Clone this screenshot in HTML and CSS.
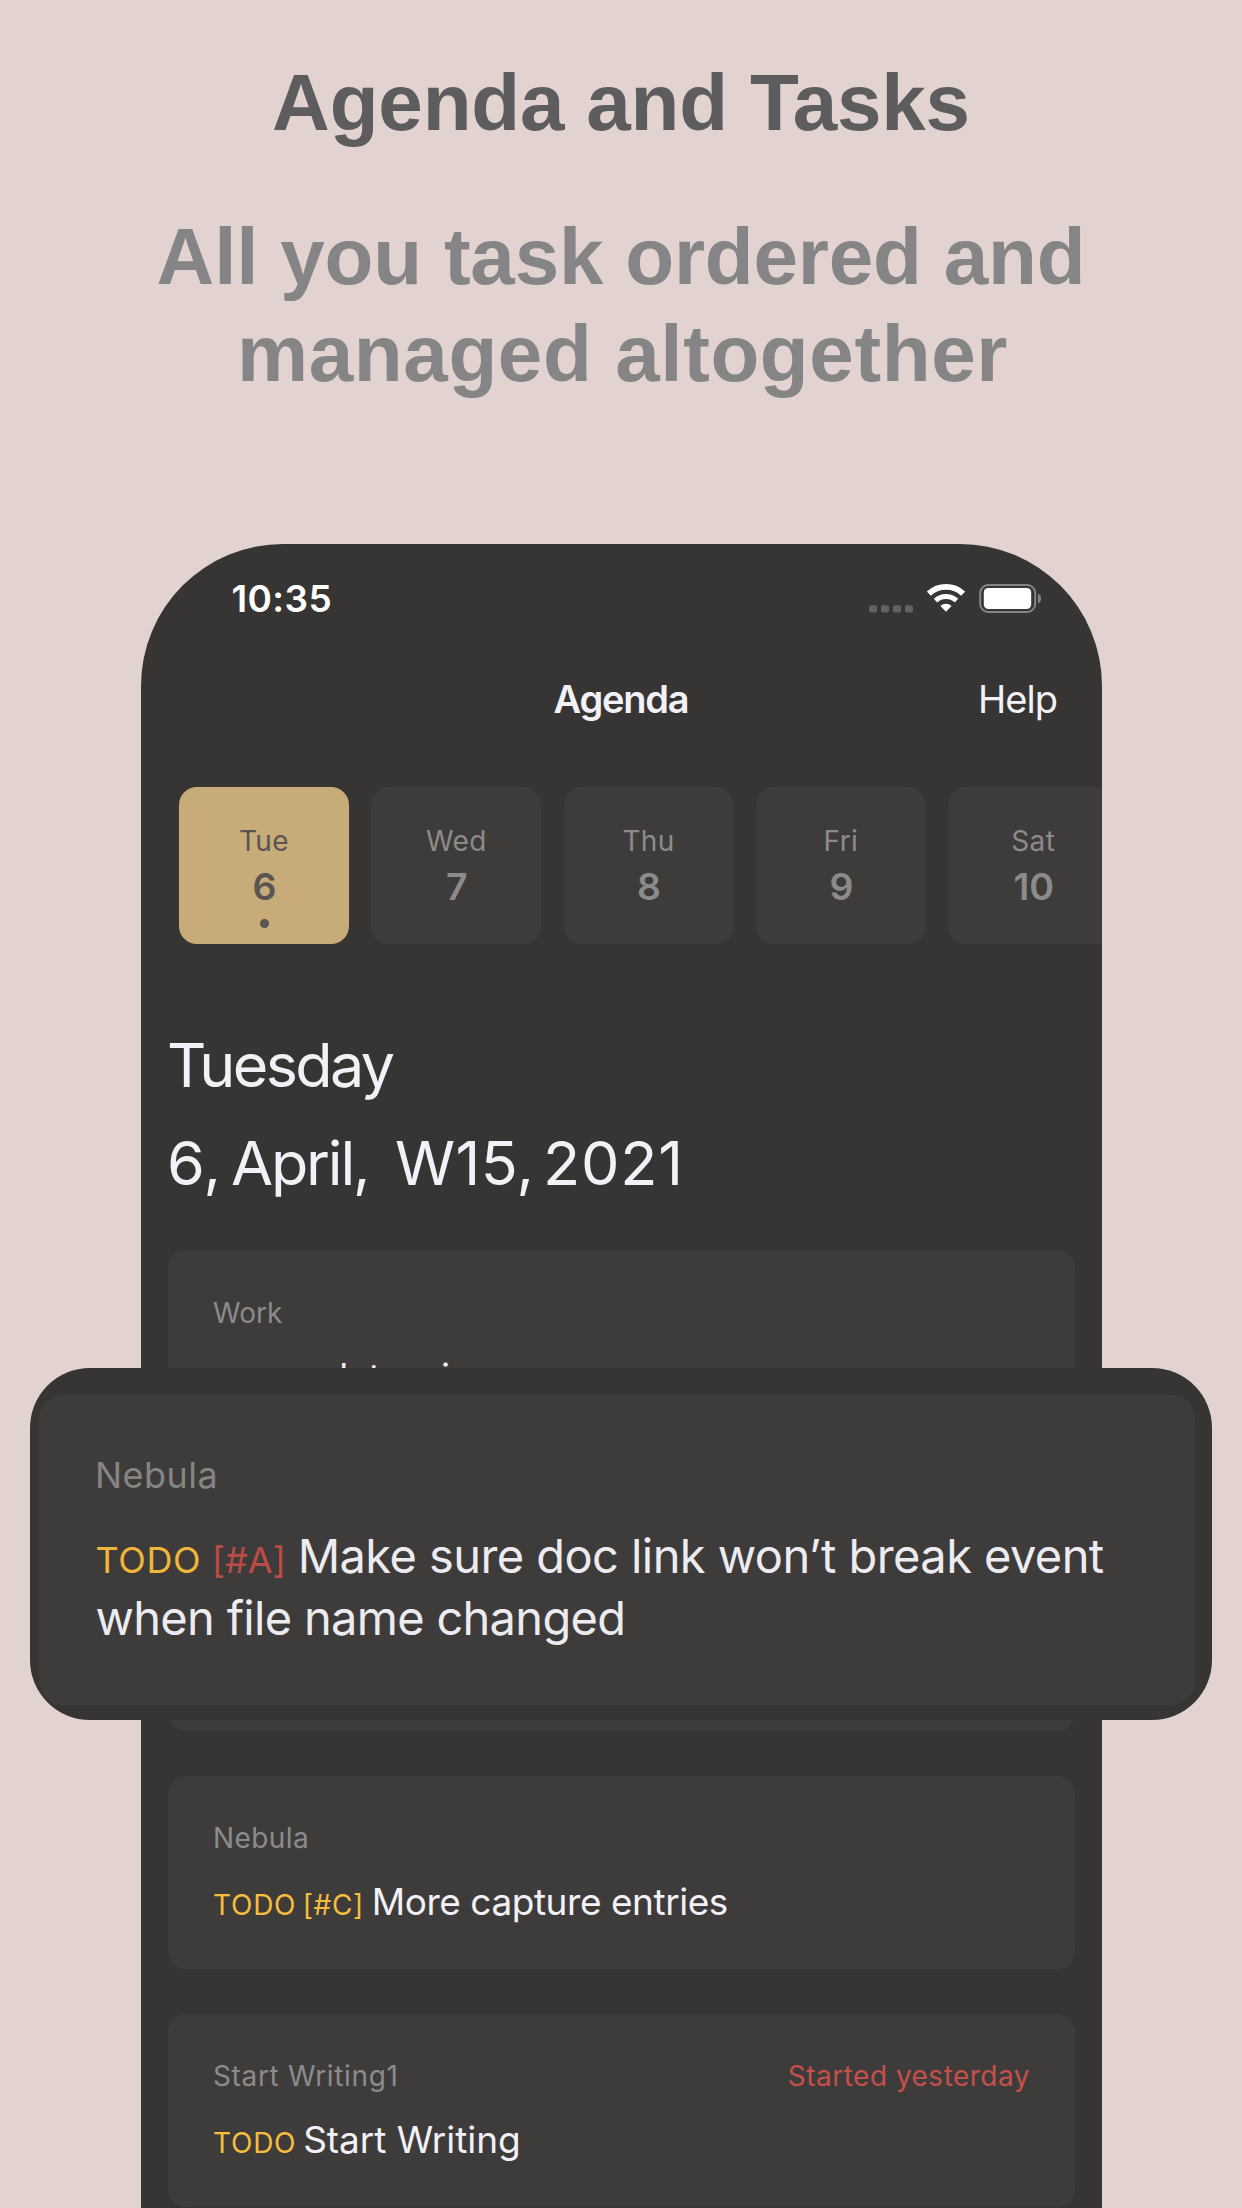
FILE: index.html
```html
<!DOCTYPE html>
<html lang="en">
<head>
<meta charset="utf-8">
<title>Agenda and Tasks</title>
<link rel="stylesheet" href="styles.css">
</head>
<body>
<main class="poster">
  <header class="intro">
    <h1 class="title">Agenda and Tasks</h1>
    <p class="subtitle">All you task ordered and<br><span class="subtitle-end">managed altogether</span></p>
  </header>

  <section class="phone">
    <div class="status">
      <span class="time">10:35</span>
      <div class="indicators">
        <svg class="signal" width="44" height="8" viewBox="0 0 44 8" fill="#646260">
          <rect x="0" y="0.2" width="8" height="7.3" rx="2"/>
          <rect x="12" y="0.2" width="8" height="7.3" rx="2"/>
          <rect x="24" y="0.2" width="8" height="7.3" rx="2"/>
          <rect x="36" y="0.2" width="8" height="7.3" rx="2"/>
        </svg>
        <svg class="wifi" width="38" height="28" viewBox="0 0 38 28" fill="none" stroke="#fff">
          <path d="M1.9 9.7A25 25 0 0 1 36.1 9.7" stroke-width="5.8"/>
          <path d="M8.5 16.7A15.4 15.4 0 0 1 29.5 16.7" stroke-width="5"/>
          <path d="M13.4 22A8.2 8.2 0 0 1 24.6 22L19.5 27.2Q19 27.7 18.5 27.2Z" fill="#fff" stroke="none"/>
        </svg>
        <svg class="battery" width="62" height="29" viewBox="0 0 62 29">
          <rect x="1.2" y="1" width="55" height="27" rx="8" fill="none" stroke="#858482" stroke-width="2"/>
          <rect x="4.8" y="4" width="47.4" height="21" rx="4.6" fill="#fff"/>
          <path d="M59 9.4Q62 11 62 14.5T59 19.6Z" fill="#858482"/>
        </svg>
      </div>
    </div>

    <nav class="navbar">
      <span class="nav-title">Agenda</span>
      <span class="nav-help">Help</span>
    </nav>

    <div class="days">
      <div class="day day-active"><span class="weekday">Tue</span><span class="number">6</span><i class="dot"></i></div>
      <div class="day"><span class="weekday">Wed</span><span class="number">7</span></div>
      <div class="day"><span class="weekday">Thu</span><span class="number">8</span></div>
      <div class="day"><span class="weekday">Fri</span><span class="number">9</span></div>
      <div class="day"><span class="weekday">Sat</span><span class="number">10</span></div>
    </div>

    <div class="date">
      <div class="date-name">Tuesday</div>
      <div class="date-parts">
        <span class="part-day">6,</span><span class="part-month">April,</span><span class="part-week">W15,</span><span class="part-year">2021</span>
      </div>
    </div>

    <div class="cards">
      <article class="card card-first">
        <div class="card-head"><span class="source plain">Work</span></div>
        <p class="task"><span class="priority high">[#A]</span> let us in</p>
      </article>
      <article class="card card-tall">
        <div class="card-head"></div>
      </article>
      <article class="card">
        <div class="card-head"><span class="source">Nebula</span></div>
        <p class="task"><span class="keyword">TODO</span> <span class="priority">[#C]</span> More capture entries</p>
      </article>
      <article class="card">
        <div class="card-head"><span class="source wide">Start Writing1</span><span class="overdue">Started yesterday</span></div>
        <p class="task even"><span class="keyword">TODO</span> Start Writing</p>
      </article>
    </div>
  </section>

  <aside class="callout">
    <div class="callout-card">
      <div class="callout-source">Nebula</div>
      <p class="callout-task"><span class="callout-keyword">TODO</span> <span class="callout-priority">[#A]</span> Make sure doc link won’t break event<br><span class="callout-second">when file name changed</span></p>
    </div>
  </aside>
</main>
</body>
</html>
```
FILE: styles.css
```css
* { box-sizing: border-box; margin: 0; padding: 0; }

body { background: #e2d3d0; }

.poster {
  position: relative;
  width: 1242px;
  height: 2208px;
  overflow: hidden;
  display: flex;
  flex-direction: column;
  align-items: center;
  font-family: Inter, "Liberation Sans", sans-serif;
}

/* Heading */
.intro {
  height: 544px;
  padding-top: 54px;
  text-align: center;
  font: bold 80px/97px "Liberation Sans", sans-serif;
}
.title { font: inherit; color: #5d5d5d; letter-spacing: -0.2px; }
.subtitle { margin-top: 57px; color: #858585; letter-spacing: -0.2px; white-space: nowrap; }
.subtitle-end { letter-spacing: 0.6px; padding-left: 3px; }

/* Phone */
.phone {
  width: 961px;
  height: 1664px;
  margin-left: 1px;
  padding-top: 33px;
  overflow: hidden;
  border-radius: 142px 142px 0 0;
  background: #373533;
  color: #f2f1f7;
}

.status {
  display: flex;
  justify-content: space-between;
  height: 44px;
  padding: 0 61px 0 90.5px;
}
.time { font-size: 37px; font-weight: 600; line-height: 44px; letter-spacing: 0.4px; color: #fff; }
.indicators { display: flex; align-items: flex-end; padding-bottom: 8px; }
.wifi { margin: 0 14px 1px; }
.signal { margin-bottom: 0.5px; }

.navbar {
  display: grid;
  grid-template-columns: 1fr auto 1fr;
  margin-top: 55px;
  padding: 0 45px 0 44px;
  font-size: 38px;
  line-height: 46px;
}
.nav-title { grid-column: 2; font-weight: 600; letter-spacing: -1.2px; }
.nav-help { justify-self: end; letter-spacing: -0.97px; }

.days { display: flex; gap: 22.3px; margin-top: 65px; padding-left: 38px; }
.day {
  flex: none;
  display: flex;
  flex-direction: column;
  align-items: center;
  width: 170px;
  height: 157px;
  padding-top: 37px;
  border-radius: 18px;
  background: #3e3c3a;
  color: #8b8b8b;
}
.day-active { background: #c7ac7a; color: #5a5452; }
.weekday { font-size: 28px; line-height: 34px; letter-spacing: 0.4px; }
.number { margin: 7px 0 0 1px; font-size: 37.5px; font-weight: 600; line-height: 44px; }
.dot { width: 9px; height: 9px; margin-top: 10px; border-radius: 50%; background: currentColor; }

.date { margin-top: 72px; padding-left: 26px; font-size: 61px; line-height: 98px; }
.date-name { letter-spacing: -2.6px; }
.date-parts { display: flex; }
.part-day { width: 64px; letter-spacing: 0.7px; }
.part-month { width: 164px; letter-spacing: -2.18px; }
.part-week { width: 148px; letter-spacing: 0.38px; }
.part-year { letter-spacing: 0.8px; }

.cards { display: flex; flex-direction: column; gap: 45px; margin-top: 38px; padding: 0 27px; }
.card {
  flex: none;
  height: 193px;
  padding: 45px 45px 42px;
  border-radius: 18px;
  background: #3e3c3a;
}
.card-first { padding-top: 46px; }
.card-first .task { padding-left: 62px; }
.card-tall { height: 243px; }
.card-head { display: flex; justify-content: space-between; font-size: 28px; line-height: 34px; }
.source { color: #8b8b8b; letter-spacing: 0.4px; }
.source.plain { letter-spacing: 0; }
.source.wide { letter-spacing: 0.65px; }
.overdue { color: #c4504b; letter-spacing: 0.48px; }
.task { margin-top: 22px; font-size: 37px; line-height: 50px; letter-spacing: -0.45px; }
.task.even { letter-spacing: -0.05px; }
.keyword { margin-right: -3.5px; font-size: 28px; line-height: 1; letter-spacing: 0.75px; color: #f9bd3c; }
.priority { margin-right: -2px; font-size: 28px; line-height: 1; letter-spacing: 0.6px; color: #f9bd3c; }
.priority.high { position: relative; top: 1px; letter-spacing: -0.3px; color: #c4504b; }

/* Enlarged entry laid over the phone */
.callout {
  position: absolute;
  top: 1368px;
  left: 30px;
  width: 1182px;
  height: 351.6px;
  padding: 27px 17.5px 15px 8.5px;
  border-radius: 60px;
  overflow: hidden;
  background: #363533;
}
.callout-card {
  height: 309.5px;
  padding: 58px 0 0 57.5px;
  border-radius: 24px;
  background: #3e3c3a;
  color: #ecebf0;
}
.callout-source { margin-left: -1px; font-size: 36px; line-height: 44px; letter-spacing: 0.45px; color: #858584; }
.callout-task { margin-top: 27.5px; font-size: 47px; line-height: 62.7px; letter-spacing: -0.57px; white-space: nowrap; }
.callout-second { margin-left: -0.5px; letter-spacing: -0.7px; }
.callout-keyword { margin-left: -0.5px; margin-right: -2px; font-size: 36px; line-height: 1; letter-spacing: 0.6px; color: #f0b63a; }
.callout-priority { margin-right: -1px; font-size: 36px; line-height: 1; letter-spacing: 0.08px; color: #bb4b47; }
```
